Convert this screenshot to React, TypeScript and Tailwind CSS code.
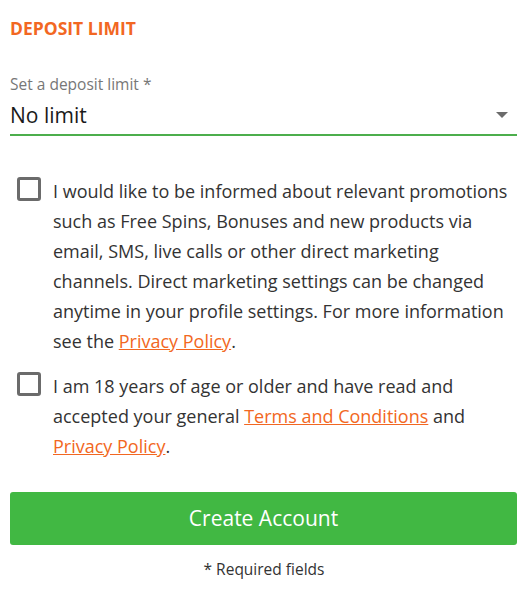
import { useState } from "react";

function Checkbox({ checked, onChange }: { checked: boolean; onChange: () => void }) {
  return (
    <button
      type="button"
      aria-pressed={checked}
      onClick={onChange}
      className="mt-[1px] w-6 h-6 shrink-0 rounded-[3px] border-[3px] border-[#6b6b6b] bg-white"
    />
  );
}

export default function App() {
  const [promo, setPromo] = useState(false);
  const [terms, setTerms] = useState(false);

  return (
    <div className="w-[528px] h-[591px] bg-white px-[10px] pt-[16px] text-[#333333]" style={{ fontFamily: '"Open Sans", sans-serif' }}>
      {/* Deposit limit */}
      <h2 className="text-[17.5px] leading-[24px] font-bold text-[#f26722]">DEPOSIT LIMIT</h2>

      <div className="mt-[34px]">
        <label className="block text-[15.5px] leading-[21px] text-[#777777]">Set a deposit limit *</label>
        <div className="flex items-center justify-between pt-[6px] pb-[5px] border-b-2 border-[#4cae4c] w-[507px]">
          <span className="text-[21px] leading-[28px] text-[#1a1a1a]">No limit</span>
          <svg width="12" height="6" viewBox="0 0 12 6" className="mr-[9px]">
            <path d="M0 0H12L6 6Z" fill="#6b6b6b" />
          </svg>
        </div>
      </div>

      {/* Consents */}
      <div className="mt-[40px] flex flex-col gap-[15px] pl-[7px] pr-[6px]">
        <div className="flex gap-[12px]">
          <Checkbox checked={promo} onChange={() => setPromo(!promo)} />
          <p className="text-[18px] leading-[30px]">
            I would like to be informed about relevant promotions such as Free Spins, Bonuses and new products via email, SMS, live calls or other direct marketing channels. Direct marketing settings can be changed anytime in your profile settings. For more information see the{" "}
            <a href="#" className="text-[#f26722] underline">Privacy Policy</a>.
          </p>
        </div>
        <div className="flex gap-[12px]">
          <Checkbox checked={terms} onChange={() => setTerms(!terms)} />
          <p className="text-[18px] leading-[30px]">
            I am 18 years of age or older and have read and accepted your general{" "}
            <a href="#" className="text-[#f26722] underline">Terms and Conditions</a> and{" "}
            <a href="#" className="text-[#f26722] underline">Privacy Policy</a>.
          </p>
        </div>
      </div>

      <button className="mt-[31px] w-[507px] h-[53px] rounded-[3px] bg-[#41b843] text-white text-[21px]">
        Create Account
      </button>
      <p className="mt-[14px] text-center text-[15.5px] leading-[21px] text-[#333333]">* Required fields</p>
    </div>
  );
}
